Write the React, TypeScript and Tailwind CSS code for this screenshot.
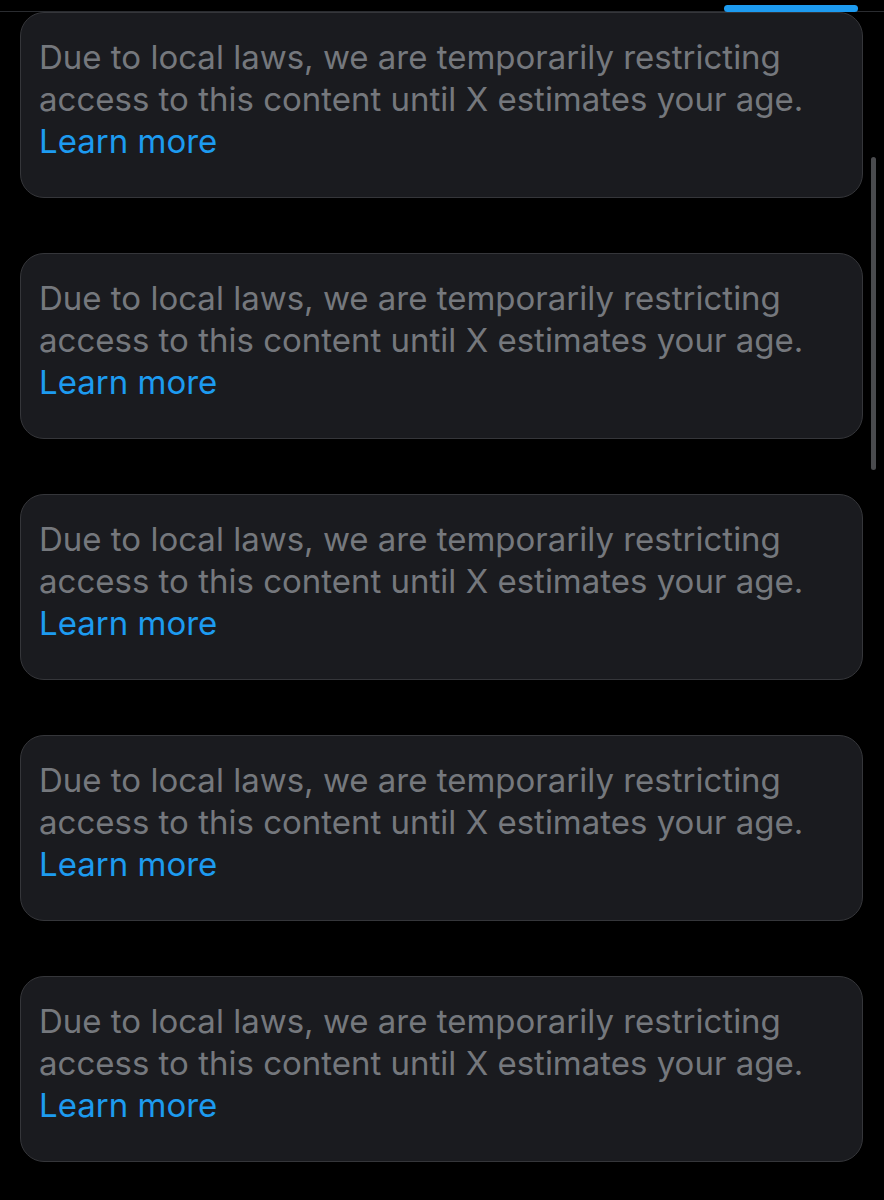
const MESSAGE =
  "Due to local laws, we are temporarily restricting access to this content until X estimates your age."

function AgeNotice() {
  return (
    <div className="h-[186px] rounded-[24px] border border-[#35363a] bg-[#1a1b1f] pl-[18px] pr-4 pt-[23px]">
      <p className="text-[33px] leading-[42px] text-[#75787d]">
        {MESSAGE}
        <br />
        <a href="#" className="text-[#1d9bf0]">
          Learn more
        </a>
      </p>
    </div>
  )
}

export default function App() {
  return (
    <div
      className="relative h-[1200px] w-[884px] overflow-hidden bg-black"
      style={{ fontFamily: "Inter, 'Noto Sans', sans-serif" }}
    >
      {/* tab strip with active indicator */}
      <div className="flex h-3 justify-end border-b border-[#2a2c30] pr-[26px]">
        <div className="mt-[5px] h-[7px] w-[134px] rounded-full bg-[#1d9bf0]" />
      </div>

      <div className="flex flex-col gap-[55px] pl-5 pr-[21px]">
        {[0, 1, 2, 3, 4].map((i) => (
          <AgeNotice key={i} />
        ))}
      </div>

      {/* scroll indicator */}
      <div className="absolute left-[871px] top-[157px] h-[313px] w-[5px] rounded-full bg-[#4a4b4e]" />
    </div>
  )
}
